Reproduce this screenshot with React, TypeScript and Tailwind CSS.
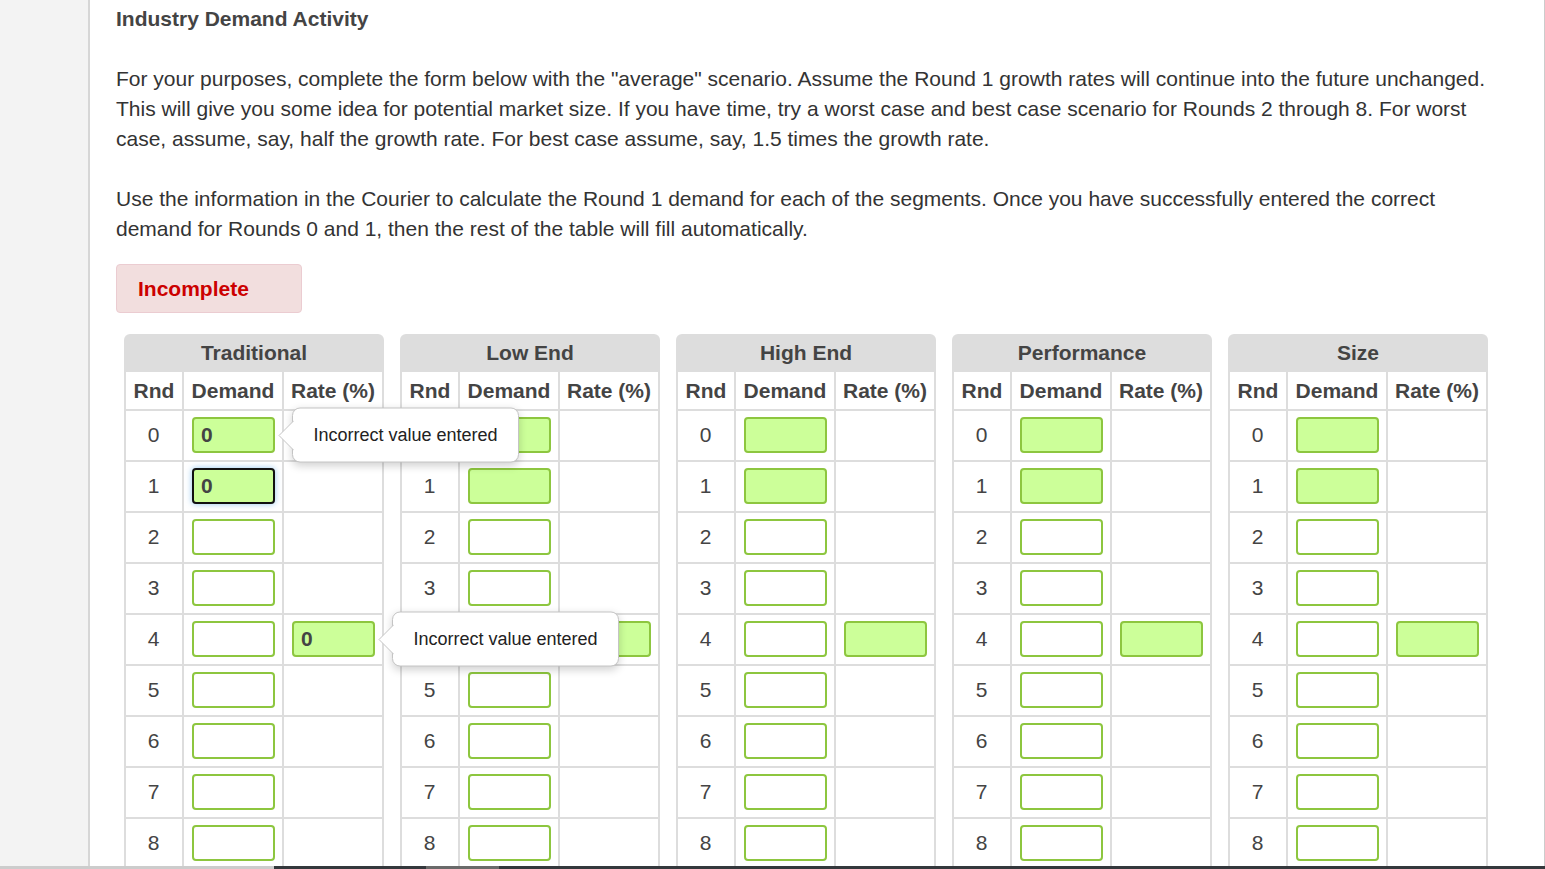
import React from "react";

const SEGMENTS = ["Traditional", "Low End", "High End", "Performance", "Size"];
const ROUNDS = [0, 1, 2, 3, 4, 5, 6, 7, 8];

function Tooltip() {
  return (
    <div className="absolute left-[calc(100%+17px)] top-1/2 -translate-y-1/2 z-20">
      <div className="relative w-[227px] h-[55px] bg-white border border-[#c4c4c4] rounded-[8px] shadow-[0_3px_8px_rgba(0,0,0,0.18)] flex items-center justify-center text-[18px] text-[#222]">
        <svg className="absolute left-[-15px] top-1/2 -translate-y-1/2" width="16" height="30" viewBox="0 0 16 30">
          <polygon points="16,0 1,15 16,30" fill="#ffffff" />
          <polyline points="16,0 1,15 16,30" fill="none" stroke="#c4c4c4" strokeWidth="1" />
        </svg>
        <span className="relative">Incorrect value entered</span>
      </div>
    </div>
  );
}

function Field({ filled, value, focused, tip }: { filled?: boolean; value?: string; focused?: boolean; tip?: boolean }) {
  const base = "w-[83px] h-[36px] rounded-[4px] border-2 flex items-center px-[7px] text-[21px] font-bold text-[#444]";
  const look = focused
    ? "border-[#111] bg-[#ccff99] shadow-[0_0_6px_rgba(102,175,233,0.7)]"
    : filled
    ? "border-[#8dc63f] bg-[#ccff99]"
    : "border-[#8dc63f] bg-white";
  return (
    <div className="relative">
      <div className={`${base} ${look}`}>{value}</div>
      {tip && <Tooltip />}
    </div>
  );
}

function SegmentTable({ name, idx }: { name: string; idx: number }) {
  return (
    <div className="w-[260px] shrink-0 bg-[#dddddd] rounded-t-[6px] px-[2px]">
      <div className="h-[38px] flex items-center justify-center text-[21px] font-bold text-[#444]">{name}</div>
      <div className="grid grid-cols-[56px_98px_98px] gap-[2px]">
        {["Rnd", "Demand", "Rate (%)"].map((h) => (
          <div key={h} className="bg-white h-[37px] flex items-center justify-center text-[21px] font-bold text-[#444]">
            {h}
          </div>
        ))}
        {ROUNDS.map((r) => (
          <React.Fragment key={r}>
            <div className="bg-white h-[49px] flex items-center justify-center pb-[2px] pr-[1px] text-[21px] text-[#444]">{r}</div>
            <div className="bg-white h-[49px] flex items-start justify-center pt-[6px] pl-[1px]">
              <Field
                filled={r < 2}
                value={idx === 0 && r < 2 ? "0" : ""}
                focused={idx === 0 && r === 1}
                tip={idx === 0 && r === 0}
              />
            </div>
            <div className="bg-white h-[49px] flex items-start justify-center pt-[6px] pl-[1px]">
              {r === 4 && <Field filled value={idx === 0 ? "0" : ""} tip={idx === 0} />}
            </div>
          </React.Fragment>
        ))}
      </div>
    </div>
  );
}

export default function App() {
  return (
    <div className="h-screen w-full overflow-hidden flex flex-col bg-white font-['Liberation_Sans',Arial,sans-serif]">
      <div className="flex flex-1 min-h-0">
        <div className="w-[90px] shrink-0 bg-[#f3f3f3] border-r-2 border-[#d6d6d6]" />
        <div className="flex-1 border-r border-[#cccccc] pl-[26px] pt-[7px] overflow-hidden">
          <h1 className="text-[21px] leading-[24px] font-bold text-[#444]">Industry Demand Activity</h1>
          <p className="mt-[33px] max-w-[1385px] text-[21px] leading-[30px] text-[#333]">
            For your purposes, complete the form below with the "average" scenario. Assume the Round 1 growth rates will continue into the future unchanged. This will give you some idea for potential market size. If you have time, try a worst case and best case scenario for Rounds 2 through 8. For worst case, assume, say, half the growth rate. For best case assume, say, 1.5 times the growth rate.
          </p>
          <p className="mt-[30px] max-w-[1385px] text-[21px] leading-[30px] text-[#333]">
            Use the information in the Courier to calculate the Round 1 demand for each of the segments. Once you have successfully entered the correct demand for Rounds 0 and 1, then the rest of the table will fill automatically.
          </p>
          <div className="mt-[20px] w-[186px] h-[49px] rounded-[4px] bg-[#f2dede] border border-[#ebccd1] flex items-center pl-[21px] text-[21px] font-bold text-[#cc0000]">
            Incomplete
          </div>
          <div className="mt-[21px] ml-[8px] flex gap-[16px]">
            {SEGMENTS.map((s, i) => (
              <SegmentTable key={s} name={s} idx={i} />
            ))}
          </div>
        </div>
      </div>
      <div className="h-[3px] shrink-0 flex">
        <div className="w-[274px] bg-[#cccccc]" />
        <div className="w-[152px] bg-[#34383c]" />
        <div className="w-[73px] bg-[#6a6a6a]" />
        <div className="flex-1 bg-[#34383c]" />
      </div>
    </div>
  );
}
